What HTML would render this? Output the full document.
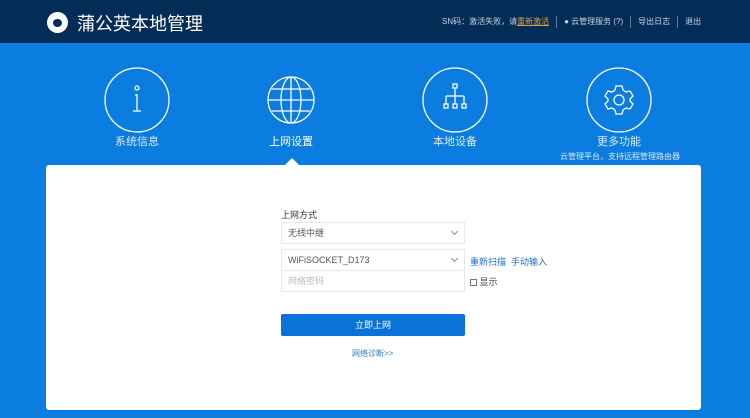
<!DOCTYPE html>
<html><head><meta charset="utf-8"><style>
*{margin:0;padding:0;box-sizing:border-box}
body{width:750px;height:418px;overflow:hidden;background:#0b7ce0;font-family:"Liberation Sans","Noto Sans CJK SC",sans-serif;position:relative}
.hd{position:absolute;left:0;top:0;width:750px;height:43px;background:#032d57}
.logo{position:absolute;left:47px;top:12px;width:21px;height:21px;border-radius:50%;background:#fff}
.logo:after{content:"";position:absolute;left:6px;top:7px;width:9px;height:8px;border-radius:50%;background:#032d57}
.title{position:absolute;left:77px;top:10px;color:#fff;font-size:18px}
.top{position:absolute;top:16px;left:442px;color:#c8d4e2;font-size:8px;white-space:nowrap}
.top span.a{color:#d8a040;text-decoration:underline}
.sep{display:inline-block;width:1px;height:12px;background:#5a7a9a;vertical-align:middle;margin:0 7px}
.nav{position:absolute;top:67px;width:70px;text-align:center;color:#dbe9f8;font-size:11px;line-height:14px}
.nav svg{display:block;margin:0 auto 2px}
.card{position:absolute;left:46px;top:165px;width:655px;height:245px;background:#fff;border-radius:3px}
.tri{position:absolute;left:285px;top:158px;border:7px solid transparent;border-bottom-color:#fff;border-top:0}
.f{position:absolute;left:281px;width:184px;border:1px solid #e8e8e8;font-size:9px;color:#555;padding-left:6px;line-height:20px;height:22px}
.f .ch{position:absolute;right:7px;top:6px;width:5px;height:5px;border-right:1px solid #888;border-bottom:1px solid #888;transform:rotate(45deg)}
</style></head><body>
<div class="hd"><div class="logo"></div><div class="title">蒲公英本地管理</div>
<div class="top">SN码：激活失败，请<span class="a">重新激活</span><span class="sep"></span>● 云管理服务 (?)<span class="sep"></span>导出日志<span class="sep"></span>退出</div></div>
<div class="nav" style="left:102px"><svg width="66" height="66" viewBox="0 0 66 66" fill="none" stroke="#fff" stroke-width="1.3"><circle cx="33" cy="33" r="32"/><circle cx="33" cy="21" r="2"/><path d="M33 27v17M29 44h8M31 28h2"/></svg>系统信息</div>
<div class="nav" style="left:256px;color:#fff"><svg width="66" height="66" viewBox="0 0 66 66" fill="none" stroke="#fff" stroke-width="1.3"><circle cx="33" cy="33" r="23"/><ellipse cx="33" cy="33" rx="10" ry="23"/><path d="M33 10v46M10 33h46M14 22h38M14 44h38"/></svg>上网设置</div>
<div class="nav" style="left:420px"><svg width="66" height="66" viewBox="0 0 66 66" fill="none" stroke="#fff" stroke-width="1.3"><circle cx="33" cy="33" r="32"/><rect x="31" y="17" width="4" height="4"/><path d="M33 21v8M24 29h18M24 29v8M33 29v8M42 29v8"/><rect x="22" y="37" width="4" height="4"/><rect x="31" y="37" width="4" height="4"/><rect x="40" y="37" width="4" height="4"/></svg>本地设备</div>
<div class="nav" style="left:584px;width:70px"><svg width="66" height="66" viewBox="0 0 66 66" fill="none" stroke="#fff" stroke-width="1.3"><circle cx="33" cy="33" r="32"/><path d="M30 19h6l1 4 3 2 4-1 3 5-3 3v2l3 3-3 5-4-1-3 2-1 4h-6l-1-4-3-2-4 1-3-5 3-3v-2l-3-3 3-5 4 1 3-2z"/><circle cx="33" cy="33" r="5"/></svg>更多功能</div>
<div style="position:absolute;left:560px;top:151px;font-size:8px;color:#dbe9f8">云管理平台，支持远程管理路由器</div>
<div class="tri"></div>
<div class="card"></div>
<div style="position:absolute;left:281px;top:208px;font-size:9px;color:#333">上网方式</div>
<div class="f" style="top:222px">无线中继<i class="ch"></i></div>
<div class="f" style="top:249px">WiFiSOCKET_D173<i class="ch"></i></div>
<div class="f" style="top:270px;color:#bbb">网络密码</div>
<div style="position:absolute;left:470px;top:255px;font-size:9px;color:#1a6fd0">重新扫描&nbsp; 手动输入</div>
<div style="position:absolute;left:470px;top:275px;font-size:9px;color:#444"><span style="display:inline-block;width:7px;height:7px;border:1px solid #777;vertical-align:-1px"></span> 显示</div>
<div style="position:absolute;left:281px;top:314px;width:184px;height:22px;background:#0b72d8;border-radius:2px;color:#fff;font-size:9px;text-align:center;line-height:22px">立即上网</div>
<div style="position:absolute;left:352px;top:348px;font-size:8px;color:#2a7bd0">网络诊断&gt;&gt;</div>
</body></html>
